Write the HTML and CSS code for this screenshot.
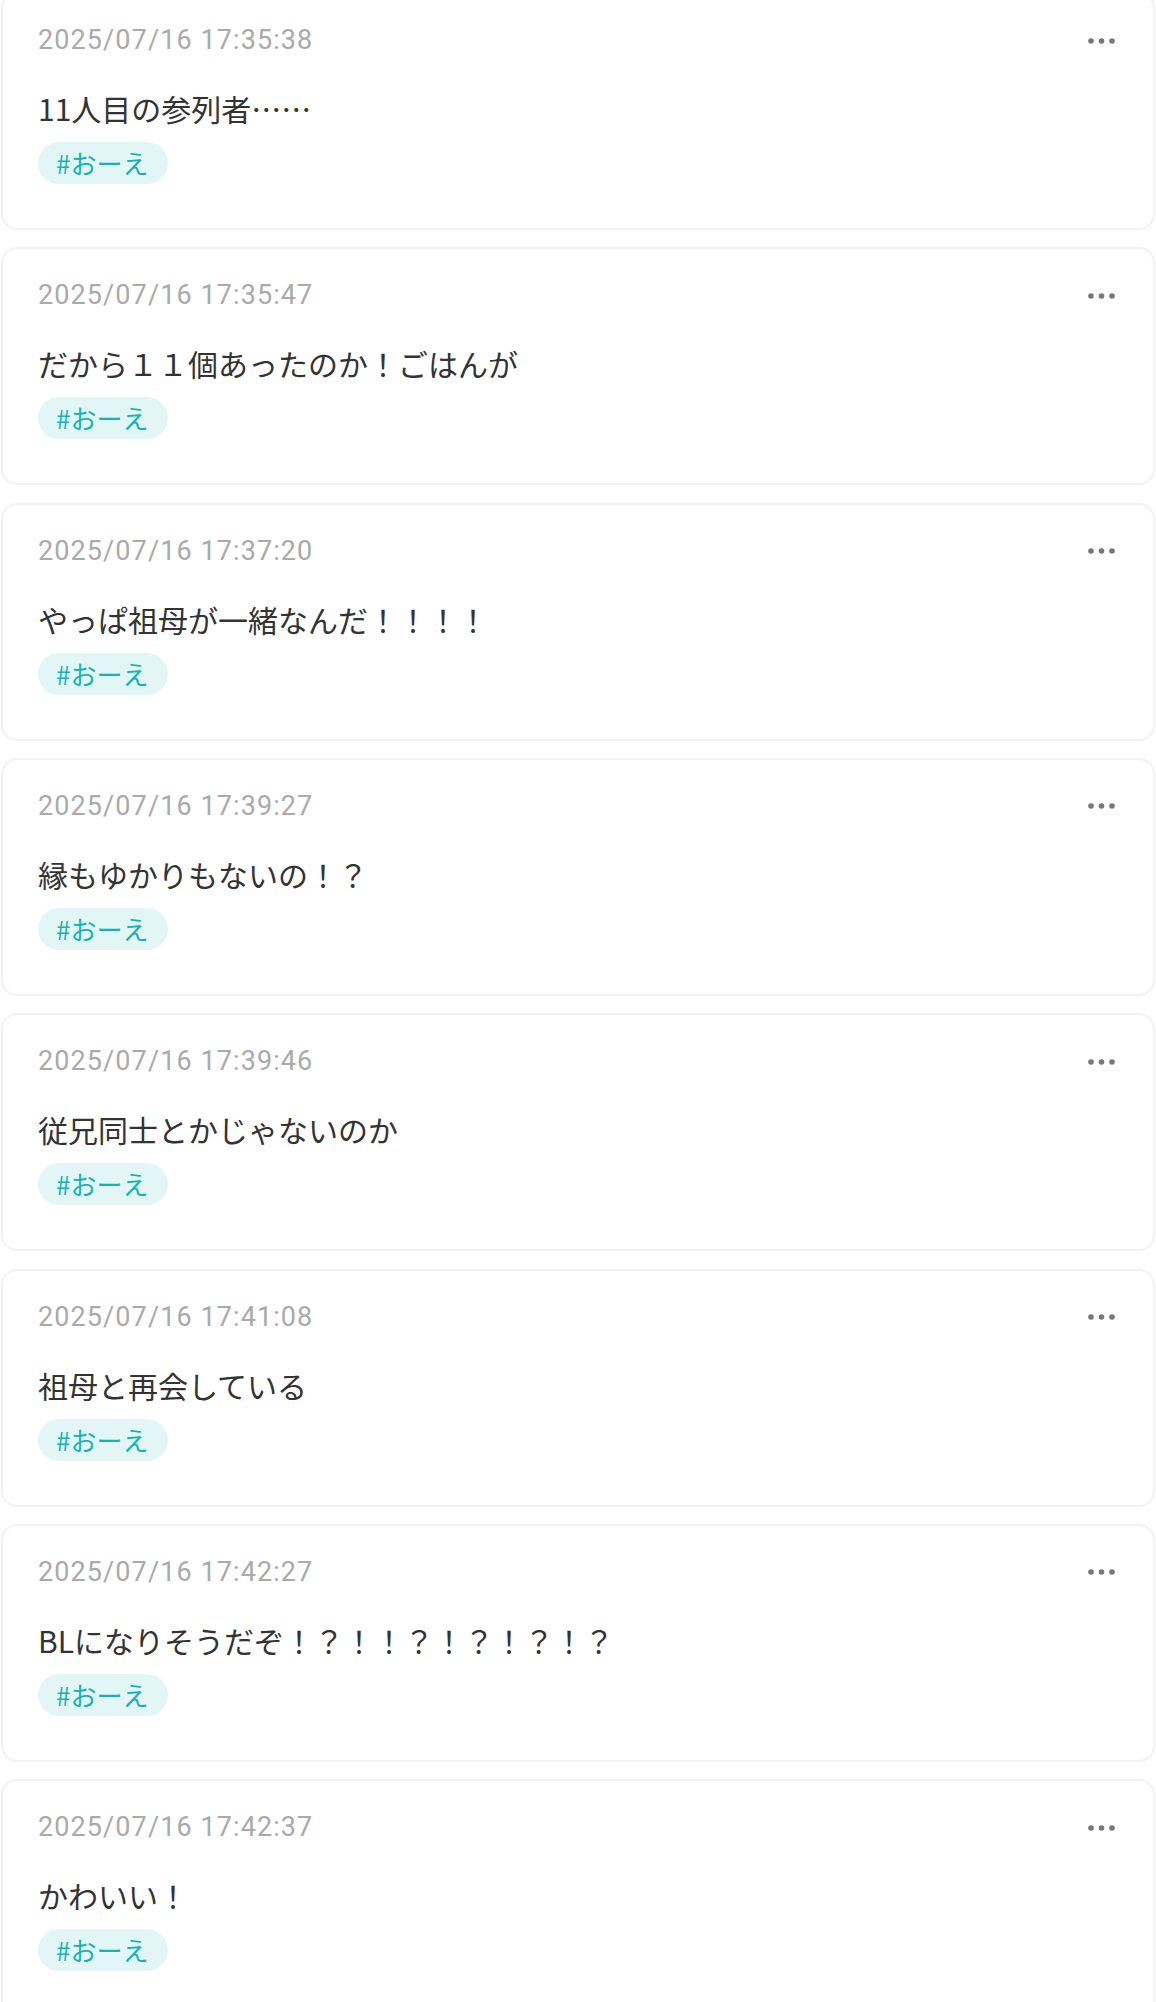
FILE: index.html
```html
<!DOCTYPE html>
<html lang="ja">
<head>
<meta charset="utf-8">
<title>Posts</title>
<link rel="stylesheet" href="styles.css">
</head>
<body>
<main class="list">
  <article class="card">
    <div class="head"><time class="ts">2025/07/16 17:35:38</time><svg class="more" viewBox="0 0 27 6" width="27" height="6"><circle cx="3" cy="3" r="2.8"/><circle cx="13.5" cy="3" r="2.8"/><circle cx="24" cy="3" r="2.8"/></svg></div>
    <p class="body">11人目の参列者……</p>
    <span class="tag">#おーえ</span>
  </article>
  <article class="card">
    <div class="head"><time class="ts">2025/07/16 17:35:47</time><svg class="more" viewBox="0 0 27 6" width="27" height="6"><circle cx="3" cy="3" r="2.8"/><circle cx="13.5" cy="3" r="2.8"/><circle cx="24" cy="3" r="2.8"/></svg></div>
    <p class="body">だから１１個あったのか！ごはんが</p>
    <span class="tag">#おーえ</span>
  </article>
  <article class="card">
    <div class="head"><time class="ts">2025/07/16 17:37:20</time><svg class="more" viewBox="0 0 27 6" width="27" height="6"><circle cx="3" cy="3" r="2.8"/><circle cx="13.5" cy="3" r="2.8"/><circle cx="24" cy="3" r="2.8"/></svg></div>
    <p class="body">やっぱ祖母が一緒なんだ！！！！</p>
    <span class="tag">#おーえ</span>
  </article>
  <article class="card">
    <div class="head"><time class="ts">2025/07/16 17:39:27</time><svg class="more" viewBox="0 0 27 6" width="27" height="6"><circle cx="3" cy="3" r="2.8"/><circle cx="13.5" cy="3" r="2.8"/><circle cx="24" cy="3" r="2.8"/></svg></div>
    <p class="body">縁もゆかりもないの！？</p>
    <span class="tag">#おーえ</span>
  </article>
  <article class="card">
    <div class="head"><time class="ts">2025/07/16 17:39:46</time><svg class="more" viewBox="0 0 27 6" width="27" height="6"><circle cx="3" cy="3" r="2.8"/><circle cx="13.5" cy="3" r="2.8"/><circle cx="24" cy="3" r="2.8"/></svg></div>
    <p class="body">従兄同士とかじゃないのか</p>
    <span class="tag">#おーえ</span>
  </article>
  <article class="card">
    <div class="head"><time class="ts">2025/07/16 17:41:08</time><svg class="more" viewBox="0 0 27 6" width="27" height="6"><circle cx="3" cy="3" r="2.8"/><circle cx="13.5" cy="3" r="2.8"/><circle cx="24" cy="3" r="2.8"/></svg></div>
    <p class="body">祖母と再会している</p>
    <span class="tag">#おーえ</span>
  </article>
  <article class="card">
    <div class="head"><time class="ts">2025/07/16 17:42:27</time><svg class="more" viewBox="0 0 27 6" width="27" height="6"><circle cx="3" cy="3" r="2.8"/><circle cx="13.5" cy="3" r="2.8"/><circle cx="24" cy="3" r="2.8"/></svg></div>
    <p class="body">BLになりそうだぞ！？！！？！？！？！？</p>
    <span class="tag">#おーえ</span>
  </article>
  <article class="card">
    <div class="head"><time class="ts">2025/07/16 17:42:37</time><svg class="more" viewBox="0 0 27 6" width="27" height="6"><circle cx="3" cy="3" r="2.8"/><circle cx="13.5" cy="3" r="2.8"/><circle cx="24" cy="3" r="2.8"/></svg></div>
    <p class="body">かわいい！</p>
    <span class="tag">#おーえ</span>
  </article>
</main>
</body>
</html>
```

FILE: styles.css
```css
html, body {
  margin: 0;
  padding: 0;
  background: #ffffff;
}

body {
  font-family: "Noto Sans CJK JP", "Noto Sans", sans-serif;
  color: #333333;
}

.list {
  display: flex;
  flex-direction: column;
  gap: 17.33px;
  margin-top: -8px;
  padding: 0 1px;
}

.card {
  display: flex;
  flex-direction: column;
  align-items: flex-start;
  background: #ffffff;
  border: 2px solid #f2f2f2;
  border-radius: 16px;
  padding: 27px 38px 44px 35px;
}

.head {
  display: flex;
  align-items: center;
  justify-content: space-between;
  align-self: stretch;
  height: 39px;
}

.ts {
  font-family: Roboto, "Liberation Sans", sans-serif;
  font-size: 27px;
  letter-spacing: 1.1px;
  line-height: 39px;
  color: #aaaaaa;
}

.more {
  display: block;
  fill: #777777;
}

.body {
  margin: 27px 0 12px 0;
  font-size: 30px;
  line-height: 43px;
  color: #333333;
}

.tag {
  display: inline-block;
  font-size: 26px;
  line-height: 42px;
  height: 42px;
  padding: 0 20px 0 18px;
  border-radius: 21px;
  background: #e3f6f6;
  color: #17b3b3;
}
```
